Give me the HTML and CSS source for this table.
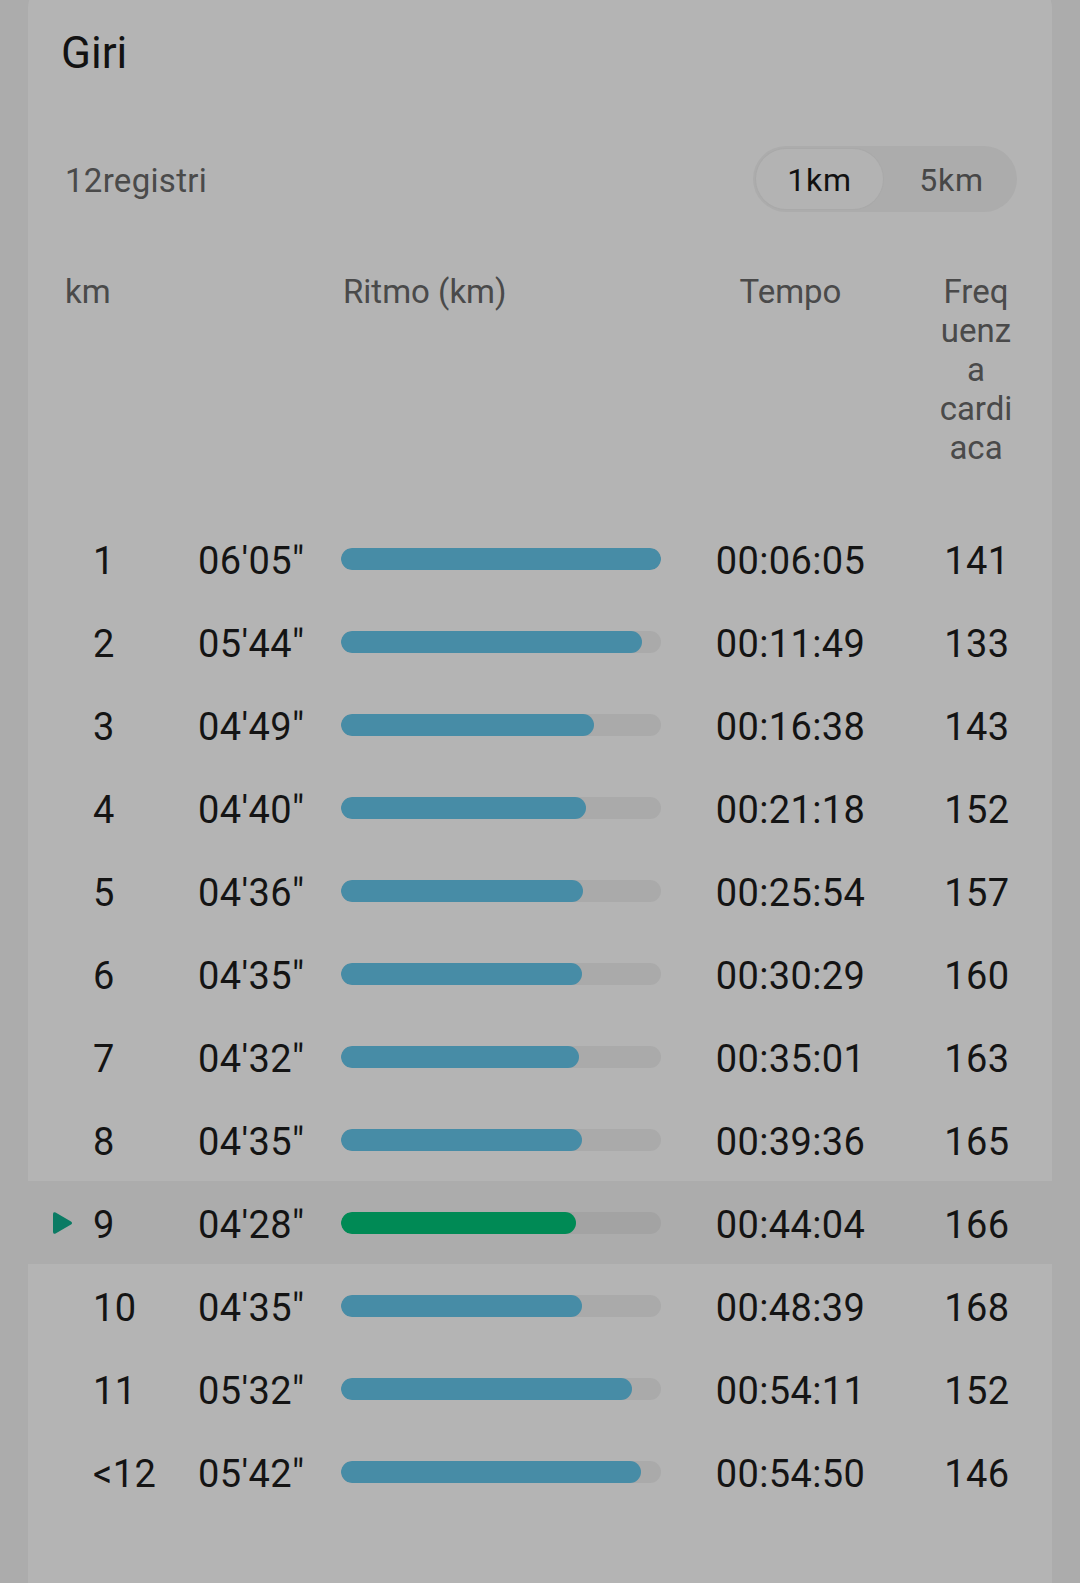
FILE: index.html
```html
<!DOCTYPE html>
<html lang="it">
<head>
<meta charset="utf-8">
<title>Giri</title>
<link rel="stylesheet" href="styles.css">
</head>
<body>
<div class="screen">
  <section class="card">
    <h1 class="title">Giri</h1>
    <div class="toolbar">
      <span class="count">12registri</span>
      <div class="segmented">
        <span class="seg seg-active">1km</span>
        <span class="seg seg-other">5km</span>
      </div>
    </div>
    <div class="grid head">
      <div class="h-km">km</div>
      <div class="h-pace">Ritmo (km)</div>
      <div class="h-time">Tempo</div>
      <div class="h-hr"><span class="h-hr-text">Frequenza cardiaca</span></div>
    </div>
    <div class="rows">
      <div class="grid row"><span class="mark"></span><span class="km">1</span><span class="pace">06'05"</span><span class="bar"><span class="fill" style="width:100%"></span></span><span class="time">00:06:05</span><span class="hr">141</span></div>
      <div class="grid row"><span class="mark"></span><span class="km">2</span><span class="pace">05'44"</span><span class="bar"><span class="fill" style="width:94.2%"></span></span><span class="time">00:11:49</span><span class="hr">133</span></div>
      <div class="grid row"><span class="mark"></span><span class="km">3</span><span class="pace">04'49"</span><span class="bar"><span class="fill" style="width:79.2%"></span></span><span class="time">00:16:38</span><span class="hr">143</span></div>
      <div class="grid row"><span class="mark"></span><span class="km">4</span><span class="pace">04'40"</span><span class="bar"><span class="fill" style="width:76.7%"></span></span><span class="time">00:21:18</span><span class="hr">152</span></div>
      <div class="grid row"><span class="mark"></span><span class="km">5</span><span class="pace">04'36"</span><span class="bar"><span class="fill" style="width:75.6%"></span></span><span class="time">00:25:54</span><span class="hr">157</span></div>
      <div class="grid row"><span class="mark"></span><span class="km">6</span><span class="pace">04'35"</span><span class="bar"><span class="fill" style="width:75.3%"></span></span><span class="time">00:30:29</span><span class="hr">160</span></div>
      <div class="grid row"><span class="mark"></span><span class="km">7</span><span class="pace">04'32"</span><span class="bar"><span class="fill" style="width:74.5%"></span></span><span class="time">00:35:01</span><span class="hr">163</span></div>
      <div class="grid row"><span class="mark"></span><span class="km">8</span><span class="pace">04'35"</span><span class="bar"><span class="fill" style="width:75.3%"></span></span><span class="time">00:39:36</span><span class="hr">165</span></div>
      <div class="grid row row-best"><span class="mark"><svg class="tri" viewBox="0 0 21 24" width="21" height="24"><path d="M3.6 1.6 Q1 0.2 1 3.2 V20.8 Q1 23.8 3.6 22.4 L19 13.6 Q21 12 19 10.4 Z"/></svg></span><span class="km">9</span><span class="pace">04'28"</span><span class="bar"><span class="fill fill-best" style="width:73.4%"></span></span><span class="time">00:44:04</span><span class="hr">166</span></div>
      <div class="grid row"><span class="mark"></span><span class="km">10</span><span class="pace">04'35"</span><span class="bar"><span class="fill" style="width:75.3%"></span></span><span class="time">00:48:39</span><span class="hr">168</span></div>
      <div class="grid row"><span class="mark"></span><span class="km">11</span><span class="pace">05'32"</span><span class="bar"><span class="fill" style="width:91%"></span></span><span class="time">00:54:11</span><span class="hr">152</span></div>
      <div class="grid row"><span class="mark"></span><span class="km">&lt;12</span><span class="pace">05'42"</span><span class="bar"><span class="fill" style="width:93.7%"></span></span><span class="time">00:54:50</span><span class="hr">146</span></div>
    </div>
  </section>
</div>
</body>
</html>
```
FILE: styles.css
```css
* { box-sizing: border-box; }
html, body { margin: 0; padding: 0; }
body {
  background: #acacac;
  font-family: Roboto, "Noto Sans", "Liberation Sans", sans-serif;
  color: #141414;
  overflow: hidden;
}
.screen {
  padding: 0 28px;
  height: 1583px;
  overflow: hidden;
}
.card {
  margin-top: -18px;
  background: #b4b4b4;
  border-radius: 26px 26px 0 0;
  min-height: 1620px;
  padding-top: 45px;
}
.title {
  margin: 0;
  padding-left: 33px;
  font-size: 44px;
  line-height: 52px;
  font-weight: 400;
  color: #121212;
}
.toolbar {
  margin-top: 67px;
  padding: 0 35px 0 37px;
  height: 66px;
  display: flex;
  align-items: center;
  justify-content: space-between;
}
.count {
  font-size: 33px;
  letter-spacing: 0.3px;
  color: #4a4a4a;
  padding-top: 2px;
}
.segmented {
  width: 264px;
  height: 66px;
  padding: 3px;
  border-radius: 33px;
  background: #acacac;
  display: grid;
  grid-template-columns: 127px 1fr;
}
.seg {
  display: flex;
  align-items: center;
  justify-content: center;
  font-size: 32px;
  letter-spacing: 0.7px;
  color: #474747;
  border-radius: 30px;
  padding-top: 2px;
}
.seg-other { padding-left: 6px; }
.seg-active {
  background: #b3b3b3;
  color: #111;
  box-shadow: 0 0 0 1px #a9a9a9;
}
.grid {
  display: grid;
  grid-template-columns: 38px 107px 144px 320px 259px 110px;
  padding-left: 24px;
}
.head {
  margin-top: 60px;
  font-size: 33px;
  line-height: 39px;
  color: #4a4a4a;
  align-items: start;
}
.h-km { grid-column: 1 / span 2; padding-left: 13px; }
.h-pace { grid-column: 4; padding-left: 2px; }
.h-time { grid-column: 5; text-align: center; }
.h-hr { grid-column: 6; display: flex; justify-content: center; padding-left: 2px; }
.h-hr-text {
  width: 78px;
  text-align: center;
  overflow-wrap: anywhere;
}
.rows { margin-top: 50px; }
.row {
  height: 83px;
  align-items: center;
  font-size: 38px;
  line-height: 44px;
  letter-spacing: 0.4px;
}
.row > span:not(.bar):not(.mark) { padding-top: 4px; }
.row-best { background: #acacac; }
.mark { display: flex; align-items: center; height: 24px; }
.tri { display: block; fill: #0b7b64; }
.km { color: #141414; padding-left: 3px; }
.pace { color: #141414; padding-left: 1px; }
.time { text-align: center; }
.hr { text-align: center; padding-left: 4px; }
.bar {
  display: block;
  height: 22px;
  border-radius: 11px;
  background: #aaaaaa;
  overflow: hidden;
}
.row-best .bar { background: #a3a3a3; }
.fill {
  display: block;
  height: 100%;
  border-radius: 11px;
  background: #478ca6;
}
.fill-best { background: #008a55; }
```
